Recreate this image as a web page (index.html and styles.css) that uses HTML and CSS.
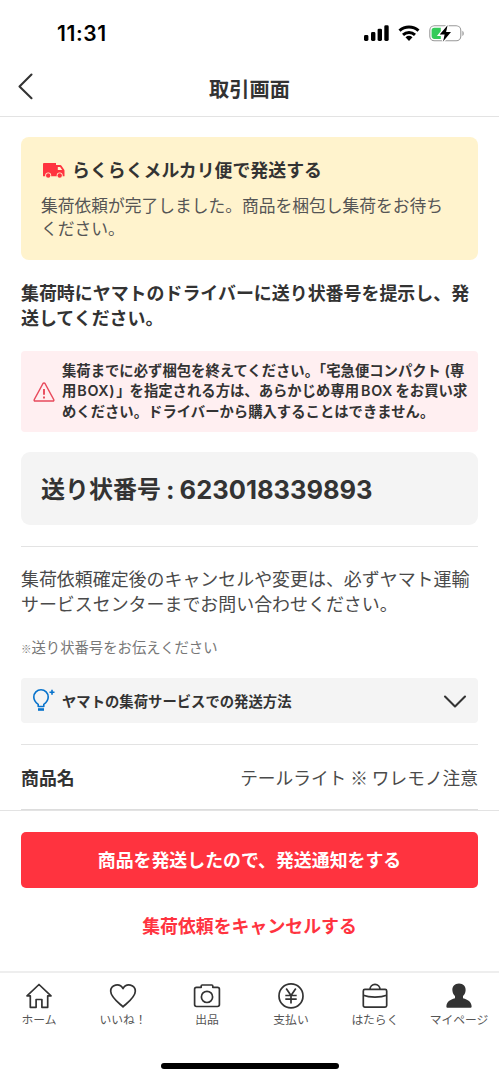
FILE: index.html
```html
<!DOCTYPE html>
<html lang="ja">
<head>
<meta charset="utf-8">
<title>取引画面</title>
<link rel="stylesheet" href="styles.css">
</head>
<body>
<div class="screen">
  <div class="status">
    <span class="time">11:31</span>
    <svg class="status-icons" width="102" height="20" viewBox="0 0 102 20">
      <g fill="#000"><rect x="1" y="11" width="4.4" height="6" rx="1.4"/><rect x="8" y="8" width="4.4" height="9" rx="1.4"/><rect x="14.6" y="4.7" width="4.4" height="12.3" rx="1.4"/><rect x="21.3" y="1.3" width="4.4" height="15.7" rx="1.4"/></g>
      <g fill="none" stroke="#000" stroke-width="3"><path d="M36.5 6.6a14.3 14.3 0 0 1 19 0"/><path d="M40 10.8a9 9 0 0 1 12 0"/></g>
      <path fill="#000" d="M42.5 13.3a5.4 5.4 0 0 1 7 0L46 17z"/>
      <rect x="66.8" y="1.8" width="31" height="15" rx="4.6" fill="none" stroke="#999" stroke-width="1.1"/>
      <path d="M71.4 3.7h6.4v11.2h-6.4a2.8 2.8 0 0 1-2.8-2.8V6.500a2.800 2.800 0 0 1 2.800-2.800z" fill="#34cb59"/>
      <path d="M99.4 6.700c1.600.7 2 4.400 0 5.300z" fill="#999"/>
      <path d="M84.600 1.200 76.700 10.600h4.900l-1.500 6.800 7.900-9.500h-4.900z" fill="#000" stroke="#fff" stroke-width="2.600" paint-order="stroke"/>
    </svg>
  </div>
  <header class="header">
    <svg class="back" width="20" height="28" viewBox="0 0 20 28"><path d="M15.500 2.500 3.500 14.500l12 11.700" fill="none" stroke="#333" stroke-width="2.100" stroke-linecap="round" stroke-linejoin="round"/></svg>
    <h1 class="title">取引画面</h1>
  </header>
  <main class="content">
    <section class="notice">
      <h2 class="notice-title">
        <svg width="22" height="16" viewBox="0 0 22 16"><path d="M1.200 0H13v2h4.200c.6 0 1 .2 1.300.7l2.700 4.100c.2.3.3.6.3 1v5.500H0V1.200C0 .5.500 0 1.200 0z" fill="#ff333f"/><path d="M14.800 3.900h2.300l2.100 3.200h-4.400z" fill="#fff3cd"/><g fill="#fff3cd"><circle cx="5.200" cy="12.500" r="3"/><circle cx="16.700" cy="12.500" r="3"/></g><g fill="#ff333f"><circle cx="5.200" cy="12.500" r="2.200"/><circle cx="16.700" cy="12.500" r="2.200"/></g></svg>
        らくらくメルカリ便で発送する
      </h2>
      <p class="notice-body">集荷依頼が完了しました。商品を梱包し集荷をお待ち<br>ください。</p>
    </section>
    <p class="lead">集荷時にヤマトのドライバーに送り状番号を提示し、発<br>送してください。</p>
    <section class="warning">
      <svg width="22" height="20" viewBox="0 0 22 20" fill="none" stroke="#e84a5c" stroke-linejoin="round"><path d="M10 1.500c.5-.8 1.500-.8 2 0l8.700 16c.4.800 0 1.500-.8 1.500H2.100c-.8 0-1.200-.7-.8-1.500z" stroke-width="1.500"/><path d="M11 7v5.700M11 14.600v2" stroke-width="1.900"/></svg>
      <p class="warning-text">集荷までに必ず梱包を終えてください。「宅急便コンパクト (専<br>用<span class="latin">BOX)</span>」<span class="after">を</span>指定される方は、あらかじめ専用<span class="latin wide">BOX</span>をお買い求<br>めください。ドライバーから購入することはできません。</p>
    </section>
    <section class="tracking">送り状番号<span class="number"><span class="colon"> : </span>623018339893</span></section>
    <p class="contact">集荷依頼確定後のキャンセルや変更は、必ずヤマト運輸<br>サービスセンターまでお問い合わせください。</p>
    <p class="note"><span class="mark">※</span>送り状番号をお伝えください</p>
    <section class="guide">
      <svg width="23" height="23" viewBox="0 0 23 23" fill="none" stroke="#0873cc" stroke-width="1.600"><path d="M5.200 17.500v-2.200C3 13.800.8 11.500.8 8a7.200 7.200 0 0 1 14.400 0c0 3.500-2.200 5.800-4.400 7.300v2.200z" stroke-linejoin="round"/><path d="M5 20.500h6" stroke-width="2.600"/><path d="M16.500 3.200h5M19 .7v5"/></svg>
      <span class="guide-label">ヤマトの集荷サービスでの発送方法</span>
      <svg class="chevron" width="24" height="14" viewBox="0 0 24 14"><path d="M2 1.500 12 11.500l10-10" fill="none" stroke="#333" stroke-width="2.100" stroke-linecap="round" stroke-linejoin="round"/></svg>
    </section>
    <div class="item"><strong>商品名</strong><span class="item-name">テールライト ※ ワレモノ注意</span></div>
  </main>
  <section class="actions">
    <button class="primary">商品を発送したので、発送通知をする</button>
    <button class="cancel">集荷依頼をキャンセルする</button>
  </section>
  <nav class="tabs">
    <a class="tab"><svg width="28" height="28" viewBox="0 0 28 28"><path d="m14 2.500 12 11.300h-3.300v11.500h-5.800v-7.800h-5.800v7.800H5.300V13.800H2z"/></svg>ホーム</a>
    <a class="tab"><svg width="28" height="28" viewBox="0 0 28 28"><path d="M14 24.800C9.500 20.700 1.700 15.400 1.700 9.300c0-6.600 8.800-8.900 12.300-2.600 3.500-6.300 12.300-4 12.300 2.600 0 6.100-7.800 11.400-12.300 15.500z"/></svg>いいね！</a>
    <a class="tab"><svg width="28" height="28" viewBox="0 0 28 28"><path d="M3.500 5.300h4.700V4c0-.6.400-1 1-1h9.600c.6 0 1 .4 1 1v1.300h4.700c1.100 0 1.900.8 1.900 1.900v15.400c0 1.100-.8 1.900-1.900 1.900h-21c-1.100 0-1.900-.8-1.900-1.900V7.200c0-1.100.8-1.900 1.900-1.900z"/><circle cx="14" cy="14.900" r="5.600"/></svg>出品</a>
    <a class="tab"><svg width="28" height="28" viewBox="0 0 28 28"><circle cx="14" cy="13.900" r="12"/><path d="m9.200 6.500 4.800 7 4.800-7M14 13.500v8M8.300 13.500h11.400M8.300 17.200h11.400"/></svg>支払い</a>
    <a class="tab"><svg width="28" height="28" viewBox="0 0 28 28"><rect x="2.300" y="7.300" width="23.400" height="17.800" rx="1.600"/><path d="M9 7.300a5 5 0 0 1 10 0M2.300 13.300c6 2.500 17.400 2.500 23.400 0"/></svg>はたらく</a>
    <a class="tab"><svg class="filled" width="28" height="28" viewBox="0 0 28 28"><path d="M14 1.500c4.300 0 7 3 6.600 7-.2 2.500-1.200 4.300-2.600 5.500v2.200c4.900 1.200 8.300 3.600 8.600 7.700.1 1.400-.4 1.900-1.700 1.900H3.100c-1.300 0-1.800-.5-1.700-1.900.3-4.100 3.700-6.500 8.600-7.700V14C8.600 12.800 7.600 11 7.400 8.500 7 4.500 9.700 1.500 14 1.500z"/></svg>マイページ</a>
  </nav>
  <div class="home-bar"></div>
</div>
</body>
</html>
```

FILE: styles.css
```css
* { box-sizing: border-box; }
body {
  margin: 0;
  background: #fff;
  color: #333;
  font-family: Inter, "Noto Sans CJK JP", sans-serif;
}
h1, h2, p { margin: 0; white-space: nowrap; }
svg { display: block; flex: none; }
.screen {
  width: 499px;
  height: 1080px;
  display: flex;
  flex-direction: column;
  overflow: hidden;
}
.status {
  height: 60px;
  padding: 24px 34px 0 57px;
  display: flex;
  justify-content: space-between;
  flex: none;
}
.time {
  color: #000;
  font: 600 21px/20px Inter, sans-serif;
  letter-spacing: 0.600px;
}
.header {
  height: 57px;
  flex: none;
  display: grid;
  grid-template-columns: 60px 1fr 60px;
  align-items: center;
  border-bottom: 1px solid #e3e3e3;
}
.back { margin: -4px 0 0 16px; }
.title { padding-top: 3px; text-align: center; font-size: 20.200px; line-height: 30px; font-weight: 600; }
.content { height: 693px; flex: none; padding: 20px 21px 0; }
.notice {
  height: 123px;
  padding: 21px 20px 0;
  border-radius: 8px;
  background: #fff3cd;
}
.notice-title {
  display: flex;
  align-items: center;
  gap: 7px;
  padding-left: 2px;
  font-size: 17.900px;
  line-height: 26px;
  font-weight: 600;
}
.notice-body { margin-top: 11px; font-size: 16.750px; line-height: 23px; color: #555; }
.lead { margin-top: 21px; font-size: 17.950px; line-height: 25px; font-weight: 600; }
.warning {
  height: 81px;
  margin-top: 20px;
  padding-left: 12px;
  display: flex;
  align-items: center;
  gap: 7px;
  border-radius: 4px;
  background: #ffeff1;
}
.warning-text { font-size: 14.350px; line-height: 20.300px; font-weight: 600; }
.latin { margin: 0 1px; letter-spacing: 0.600px; }
.wide { margin: 0 2.500px 0 2px; }
.after { margin-left: -1px; }
.tracking {
  height: 73px;
  margin-top: 20px;
  padding: 2px 0 0 20px;
  display: flex;
  align-items: center;
  border-radius: 9px;
  background: #f4f4f4;
  font-size: 24px;
  line-height: 36px;
  font-weight: 600;
}
.number { white-space: pre; font-size: 25.500px; font-weight: 700; }
.colon { font-feature-settings: "calt" 0; word-spacing: -1px; }
.contact {
  margin-top: 21px;
  padding-top: 20px;
  border-top: 1px solid #e3e3e3;
  font-size: 17.950px;
  line-height: 25px;
  color: #4a4a4a;
}
.note { margin-top: 20px; font-size: 14.350px; line-height: 22px; color: #777; }
.mark { font-family: "Noto Sans CJK JP", sans-serif; font-size: 10.500px; }
.guide {
  height: 45px;
  margin-top: 18px;
  padding: 0 11px 0 12px;
  display: flex;
  align-items: center;
  background: #f4f4f4;
  border-radius: 4px;
}
.guide-label { flex: 1; margin: -1px 0 0 6px; font-size: 14.350px; font-weight: 600; }
.chevron { margin-top: 2px; }
.item {
  height: 66px;
  margin-top: 21px;
  padding-bottom: 1px;
  display: flex;
  align-items: center;
  justify-content: space-between;
  border-top: 1px solid #e3e3e3;
  border-bottom: 1px solid #ddd;
  font-size: 17.900px;
  color: #4a4a4a;
}
.item strong { font-weight: 600; color: #333; }
.item-name { font-family: "Noto Sans CJK JP", sans-serif; font-size: 17.700px; }
.actions {
  height: 161px;
  flex: none;
  padding: 21px 21px 0;
  border-top: 1px solid #e3e3e3;
  display: flex;
  flex-direction: column;
}
button { border: 0; padding: 0; font-family: inherit; font-size: 17.900px; font-weight: 600; }
.primary { height: 56px; padding-bottom: 2px; border-radius: 5px; background: #ff333f; color: #fff; }
.cancel { height: 36px; margin-top: 19px; background: none; color: #ff333f; }
.tabs {
  height: 66px;
  flex: none;
  padding: 9px 0 0;
  margin: 0 -3px;
  border-top: 2px solid #eee;
  display: grid;
  grid-template-columns: repeat(6, 84px);
  align-items: start;
}
.tab {
  display: flex;
  flex-direction: column;
  align-items: center;
  font-size: 11.800px;
  line-height: 20px;
  color: #555;
}
.tab svg { fill: none; stroke: #333; stroke-width: 1.700; stroke-linejoin: round; }
.tab .filled { fill: #333; stroke: none; }
.home-bar {
  width: 178px;
  height: 6px;
  margin: 26px auto 0;
  border-radius: 3px;
  background: #000;
}
```
